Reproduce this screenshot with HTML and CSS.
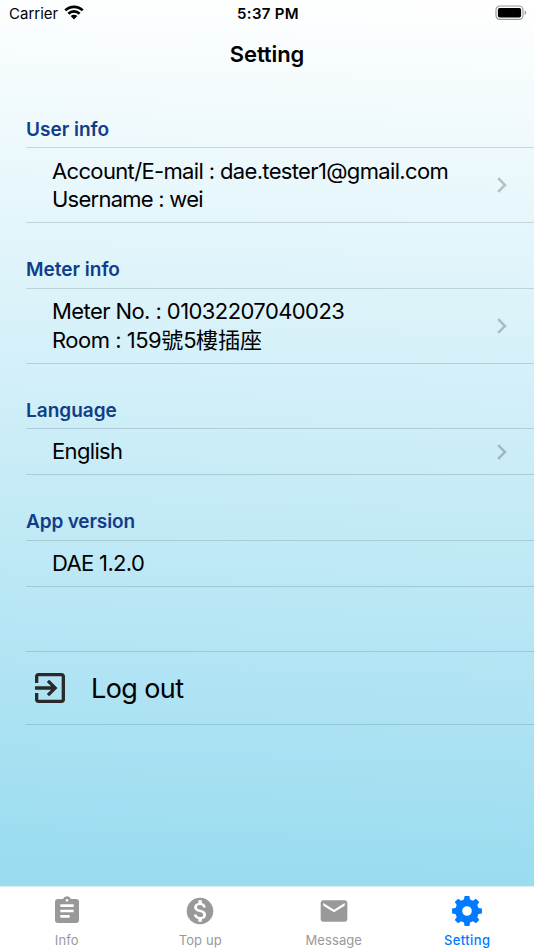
FILE: index.html
```
<!DOCTYPE html>
<html lang="en">
<head>
    <meta charset="utf-8">
    <title>Setting</title>
    <link rel="stylesheet" href="styles.css">
</head>
<body>
    <div class="status-bar">
        <div class="carrier">
            <span class="carrier-name">Carrier</span>
            <svg class="wifi" viewBox="0 0 20 15">
                <path d="M1.3 5.4a12.4 12.4 0 0 1 17.4 0M4.4 8.7a8 8 0 0 1 11.2 0" fill="none" stroke="#000" stroke-width="2.7"/>
                <path d="M10 14.4l-3.3-3.3a4.7 4.7 0 0 1 6.6 0z"/>
            </svg>
        </div>
        <span class="time">5:37 PM</span>
        <svg class="battery" viewBox="0 0 32 16">
            <rect x="1" y="1" width="27" height="13.4" rx="3.8" fill="#fff" stroke="#999" stroke-width="1.2"/>
            <rect x="2.9" y="2.9" width="23.2" height="9.6" rx="1.8"/>
            <path d="M29.7 5.4c2 .9 2 3.8 0 4.7z" fill="#999"/>
        </svg>
    </div>

    <h1>Setting</h1>

    <main>
        <h2>User info</h2>
        <div class="row double">
            <div class="text">
                <div class="account">Account/E-mail : dae.tester1@gmail.com</div>
                <div class="username">Username : wei</div>
            </div>
            <svg class="chevron" viewBox="0 0 12 18"><path d="M2.2 2.2L9 9l-6.8 6.8"/></svg>
        </div>

        <h2>Meter info</h2>
        <div class="row double">
            <div class="text">
                <div class="meter">Meter No. : 01032207040023</div>
                <div class="room">Room : 159<span class="cjk">號</span>5<span class="cjk">樓插座</span></div>
            </div>
            <svg class="chevron" viewBox="0 0 12 18"><path d="M2.2 2.2L9 9l-6.8 6.8"/></svg>
        </div>

        <h2>Language</h2>
        <div class="row">
            <div class="text">English</div>
            <svg class="chevron" viewBox="0 0 12 18"><path d="M2.2 2.2L9 9l-6.8 6.8"/></svg>
        </div>

        <h2 class="app-version">App version</h2>
        <div class="row">
            <div class="text">DAE 1.2.0</div>
        </div>

        <div class="row logout">
            <svg class="exit" viewBox="3 3 18 18">
                <path d="M10.09 15.59L11.5 17l5-5-5-5-1.41 1.41L12.67 11H3v2h9.67l-2.58 2.59zM19 3H5c-1.11 0-2 .9-2 2v4h2V5h14v14H5v-4H3v4c0 1.1.89 2 2 2h14c1.1 0 2-.9 2-2V5c0-1.1-.9-2-2-2z"/>
            </svg>
            <span>Log out</span>
        </div>
    </main>

    <nav>
        <div class="tab">
            <svg viewBox="0 0 24 24"><path d="M19 3h-4.180C14.4 1.84 13.3 1 12 1s-2.4.84-2.82 2H5c-1.1 0-2 .9-2 2v14c0 1.1.9 2 2 2h14c1.1 0 2-.9 2-2V5c0-1.1-.9-2-2-2zm-7 0c.55 0 1 .45 1 1s-.45 1-1 1-1-.45-1-1 .45-1 1-1zm2 14H7v-2h7v2zm3-4H7v-2h10v2zm0-4H7V7h10v2z"/></svg>
            <span>Info</span>
        </div>
        <div class="tab">
            <svg viewBox="0 0 24 24"><path d="M12 2C6.48 2 2 6.48 2 12s4.48 10 10 10 10-4.48 10-10S17.52 2 12 2zm1.41 16.09V20h-2.67v-1.93c-1.71-.36-3.16-1.46-3.27-3.4h1.96c.1 1.05.82 1.87 2.65 1.87 1.96 0 2.4-.98 2.4-1.59 0-.83-.44-1.61-2.67-2.14-2.48-.6-4.18-1.62-4.18-3.67 0-1.72 1.39-2.84 3.11-3.21V4h2.67v1.95c1.86.45 2.79 1.86 2.85 3.39H14.3c-.05-1.11-.64-1.87-2.22-1.87-1.5 0-2.4.68-2.4 1.64 0 .84.65 1.39 2.67 1.91s4.18 1.39 4.18 3.91c-.01 1.83-1.38 2.83-3.12 3.16z"/></svg>
            <span>Top up</span>
        </div>
        <div class="tab">
            <svg viewBox="0 0 24 24"><path d="M20 4H4c-1.1 0-2 .9-2 2v12c0 1.1.9 2 2 2h16c1.1 0 2-.9 2-2V6c0-1.1-.9-2-2-2zm0 4l-8 5-8-5V6l8 5 8-5v2z"/></svg>
            <span>Message</span>
        </div>
        <div class="tab active">
            <svg viewBox="0 0 24 24"><path fill-rule="evenodd" d="M9.7 3.4L10.2.8h3.6l.5 2.6 2.2.9 2.2-1.5 2.5 2.5-1.5 2.2.9 2.2 2.6.5v3.6l-2.6.5-.9 2.2 1.5 2.2-2.5 2.5-2.2-1.5-2.2.9-.5 2.6h-3.6l-.5-2.6-2.2-.9-2.2 1.5-2.500-2.5 1.5-2.2-.9-2.2-2.6-.5v-3.600l2.600-.5.9-2.2-1.5-2.2 2.5-2.5 2.2 1.5zM12 8.400a3.600 3.600 0 1 0 0 7.200 3.600 3.600 0 0 0 0-7.200z"/></svg>
            <span>Setting</span>
        </div>
    </nav>
</body>
</html>
```

FILE: styles.css
```
* {
    box-sizing: border-box;
}

body {
    margin: 0;
    height: 950px;
    display: flex;
    flex-direction: column;
    font-family: Inter, "Noto Sans CJK TC", sans-serif;
    color: #000;
    background: linear-gradient(182deg, #fff 0, #9adcf0 886px);
    overflow: hidden;
}

.status-bar {
    height: 27px;
    padding: 0 7px 0 9px;
    display: grid;
    grid-template-columns: 1fr auto 1fr;
    align-items: center;
    font-size: 15px;
}

.carrier {
    display: flex;
    align-items: center;
    gap: 6px;
}

.wifi {
    width: 20px;
    height: 15px;
    margin-top: -2px;
}

.time {
    font-weight: 600;
    letter-spacing: 0.3px;
}

.battery {
    width: 32px;
    height: 16px;
    margin-top: -1px;
    justify-self: end;
}

h1 {
    margin: 0;
    height: 55px;
    line-height: 55px;
    font-size: 22px;
    font-weight: 600;
    letter-spacing: -0.1px;
    text-align: center;
}

main {
    flex: 1;
    padding-left: 26px;
}

h2 {
    margin: 0;
    height: 64.3px;
    padding-top: 33px;
    line-height: 28px;
    font-size: 19px;
    font-weight: 600;
    color: #113d88;
}

h2:first-child {
    height: 65.3px;
    padding-top: 34px;
}

.app-version {
    letter-spacing: -0.15px;
}

.row {
    height: 47.5px;
    display: flex;
    align-items: center;
    justify-content: space-between;
    padding: 0 26px;
    border-top: 1px solid rgba(60, 80, 100, 0.2);
    border-bottom: 1px solid rgba(60, 80, 100, 0.2);
}

.double {
    height: 76px;
}

.text {
    font-size: 22px;
    line-height: 28.3px;
    letter-spacing: -0.65px;
    white-space: nowrap;
}

.text div {
    height: 28.3px;
}

.username {
    letter-spacing: -0.75px;
}

.meter {
    letter-spacing: -0.58px;
}

.room {
    letter-spacing: -0.5px;
}

.cjk {
    letter-spacing: 0;
}

.chevron {
    width: 12px;
    height: 18px;
    fill: none;
    stroke: rgba(60, 60, 67, 0.3);
    stroke-width: 2.5;
}

.logout {
    height: 73.5px;
    margin-top: 64.3px;
    padding: 0 9px;
    justify-content: flex-start;
    gap: 26px;
    font-size: 27px;
    letter-spacing: -0.6px;
}

.exit {
    width: 30px;
    height: 30px;
    fill: #2a2a2a;
}

nav {
    height: 64px;
    display: grid;
    grid-template-columns: repeat(4, 1fr);
    background: #fff;
    border-top: 1px solid #dceff5;
}

.tab {
    display: flex;
    flex-direction: column;
    align-items: center;
    padding-top: 8px;
    font-size: 13px;
    line-height: 16px;
    letter-spacing: 0.1px;
    color: #999;
    fill: #999;
}

.tab svg {
    width: 32px;
    height: 32px;
    margin-bottom: 5px;
}

.active {
    font-weight: 500;
    letter-spacing: 0.4px;
    color: #007aff;
    fill: #007aff;
}
```
